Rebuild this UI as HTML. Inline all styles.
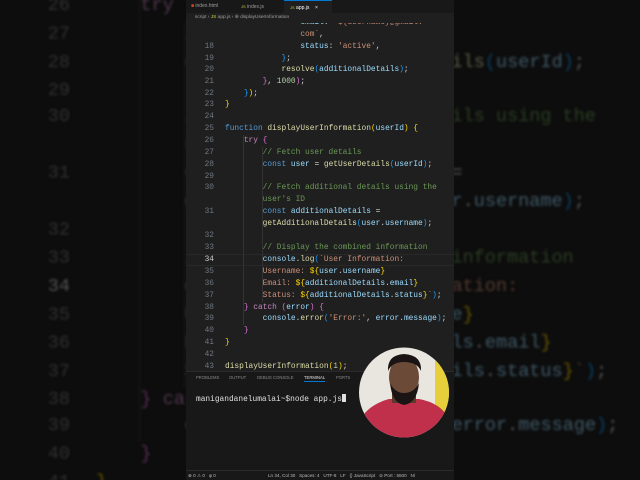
<!DOCTYPE html>
<html style="overflow:hidden;width:640px;height:480px"><head><meta charset="utf-8"><style>
*{margin:0;padding:0;box-sizing:border-box}
body{width:640px;height:480px;overflow:hidden;background:#0d0d0d;position:relative;font-family:"Liberation Mono",monospace}
.code{position:absolute;left:186px;top:0;width:268px;height:371px;font-size:7.85px;}
.code .l{position:absolute;left:0;width:268px;height:12px;line-height:12px;white-space:pre;}
.code .n{position:absolute;left:0;width:28px;text-align:right;color:#6e7681}
.code .t{position:absolute;left:39px;color:#d4d4d4}
.k{color:#569cd6}.c{color:#c586c0}.f{color:#dcdcaa}.v{color:#9cdcfe}.s{color:#ce9178}.cm{color:#6a9955}.nu{color:#b5cea8}
.y{color:#ffd700}.p{color:#da70d6}.b{color:#179fff}
#clip{position:absolute;left:0;top:0;width:640px;height:480px;overflow:hidden}
#bg{position:absolute;left:0;top:0;width:640px;height:480px;transform-origin:0 0;transform:matrix(2.36,0,0,2.36,-435,-325);filter:brightness(0.4) blur(0.6px)}
#bg .n{color:#777}
#panel{position:absolute;left:186px;top:0;width:268px;height:480px;background:#1f1f1f;overflow:hidden}
#panel .code{left:0}
.tabs{position:absolute;left:0;top:0;width:268px;height:13px;background:#181818;font-family:"Liberation Sans",sans-serif;font-size:5px;color:#9d9d9d}
.tab{position:absolute;top:0;height:13px;line-height:13px}
.crumb{position:absolute;left:0;top:13px;width:268px;height:10px;background:#1f1f1f;font-family:"Liberation Sans",sans-serif;font-size:4.8px;color:#a0a0a0;line-height:10px;padding-left:9px}
.term{position:absolute;left:0;top:371px;width:268px;height:100px;background:#181818;border-top:1px solid #2b2b2b}
.ttabs{position:absolute;top:3px;font-family:"Liberation Sans",sans-serif;font-size:4.2px;color:#8a8a8a}
.status{position:absolute;left:0;top:470px;width:268px;height:10px;background:#181818;border-top:1px solid #2b2b2b;font-family:"Liberation Sans",sans-serif;font-size:4.6px;color:#bbb;line-height:9px;white-space:nowrap}
</style></head><body>

<div id="clip"><div id="bg"><div class="code" id="c1"></div></div></div>

<div id="panel">
 <div style="position:absolute;left:0;top:254px;width:268px;height:12px;border-top:1px solid #282828;border-bottom:1px solid #282828"></div>
 <div class="code" id="c2"></div>
 <div class="tabs">
  <div class="tab" style="left:5px"><span style="color:#e44d26">■</span> index.html</div>
  <div class="tab" style="left:55px"><span style="color:#cbcb41;font-size:4px">JS</span> index.js</div>
  <div class="tab" style="left:98px;width:48px;background:#1f1f1f;color:#fff;padding-left:6px;border-top:1px solid #0078d4"><span style="color:#cbcb41;font-size:4px">JS</span> app.js &nbsp;&nbsp;&nbsp;×</div>
 </div>
 <div class="crumb">script › <span style="color:#cbcb41">JS</span> app.js › ⊛ displayUserInformation</div>
 <div class="term">
  <div class="ttabs" style="left:10px">PROBLEMS</div>
  <div class="ttabs" style="left:43px">OUTPUT</div>
  <div class="ttabs" style="left:71px">DEBUG CONSOLE</div>
  <div class="ttabs" style="left:118px;color:#e0e0e0;border-bottom:1px solid #0078d4;padding-bottom:1px">TERMINAL</div>
  <div class="ttabs" style="left:150px">PORTS</div>
  <div style="position:absolute;left:10px;top:22px;font-size:7.85px;color:#e0e0e0;white-space:pre">manigandanelumalai~$node app.js<span style="display:inline-block;width:4px;height:8px;background:#e0e0e0;vertical-align:-1px"></span></div>
 </div>
 <div class="status">
  <span style="position:absolute;left:2px">⊗ 0 ⚠ 0 &nbsp;&nbsp;ψ 0</span>
  <span style="position:absolute;left:82px">Ln 34, Col 30 &nbsp;&nbsp;Spaces: 4 &nbsp;&nbsp;UTF-8 &nbsp;&nbsp;LF &nbsp;&nbsp;{} JavaScript &nbsp;&nbsp;⊘ Port : 5500 &nbsp;&nbsp;Nl</span>
 </div>
 <svg style="position:absolute;left:173px;top:347px" width="90" height="91" viewBox="0 0 90 91">
  <defs><clipPath id="cc"><circle cx="45" cy="45.5" r="45"/></clipPath></defs>
  <g clip-path="url(#cc)">
   <rect width="90" height="91" fill="#e9e6df"/>
   <rect x="76" y="0" width="14" height="91" fill="#e6cf3a"/>
   <path d="M0 75 Q8 58 30 52 L60 52 Q82 56 90 72 L90 91 L0 91Z" fill="#c0304a"/>
   <rect x="33" y="38" width="24" height="18" fill="#5a3b2c"/>
   <ellipse cx="45" cy="30" rx="15" ry="20" fill="#6b4a38"/>
   <path d="M29 24 Q28 8 45 7 Q63 8 62 24 Q58 15 45 15 Q33 15 29 24Z" fill="#1a1414"/>
   <path d="M31 36 Q33 56 45 58 Q58 56 60 36 Q55 46 45 46 Q36 46 31 36Z" fill="#1a1414"/>
  </g>
 </svg>
</div>

<script>
var L=[
[23,"","                <span class='v'>email</span>: <span class='s'>`${username}@gmail.</span>"],
[35,"","                <span class='s'>com`</span>,"],
[47,"18","                <span class='v'>status</span>: <span class='s'>'active'</span>,"],
[59,"19","            <span class='b'>}</span>;"],
[70,"20","            <span class='f'>resolve</span><span class='b'>(</span><span class='v'>additionalDetails</span><span class='b'>)</span>;"],
[82,"21","        <span class='p'>}</span>, <span class='nu'>1000</span><span class='p'>)</span>;"],
[94,"22","    <span class='b'>}</span><span class='y'>)</span>;"],
[105,"23","<span class='y'>}</span>"],
[117,"24",""],
[129,"25","<span class='k'>function</span> <span class='f'>displayUserInformation</span><span class='y'>(</span><span class='v'>userId</span><span class='y'>)</span> <span class='y'>{</span>"],
[141,"26","    <span class='c'>try</span> <span class='p'>{</span>"],
[153,"27","        <span class='cm'>// Fetch user details</span>"],
[165,"28","        <span class='k'>const</span> <span class='v'>user</span> = <span class='f'>getUserDetails</span><span class='b'>(</span><span class='v'>userId</span><span class='b'>)</span>;"],
[177,"29",""],
[188,"30","        <span class='cm'>// Fetch additional details using the</span>"],
[200,"","        <span class='cm'>user's ID</span>"],
[212,"31","        <span class='k'>const</span> <span class='v'>additionalDetails</span> ="],
[224,"","        <span class='f'>getAdditionalDetails</span><span class='b'>(</span><span class='v'>user</span>.<span class='v'>username</span><span class='b'>)</span>;"],
[236,"32",""],
[248,"33","        <span class='cm'>// Display the combined information</span>"],
[260,"34","        <span class='v'>console</span>.<span class='f'>log</span><span class='b'>(</span><span class='s'>`User Information:</span>"],
[272,"35","        <span class='s'>Username: </span><span class='y'>${</span><span class='v'>user</span>.<span class='v'>username</span><span class='y'>}</span>"],
[284,"36","        <span class='s'>Email: </span><span class='y'>${</span><span class='v'>additionalDetails</span>.<span class='v'>email</span><span class='y'>}</span>"],
[296,"37","        <span class='s'>Status: </span><span class='y'>${</span><span class='v'>additionalDetails</span>.<span class='v'>status</span><span class='y'>}</span><span class='s'>`</span><span class='b'>)</span>;"],
[308,"38","    <span class='p'>}</span> <span class='c'>catch</span> <span class='p'>(</span><span class='v'>error</span><span class='p'>)</span> <span class='p'>{</span>"],
[319,"39","        <span class='v'>console</span>.<span class='f'>error</span><span class='b'>(</span><span class='s'>'Error:'</span>, <span class='v'>error</span>.<span class='v'>message</span><span class='b'>)</span>;"],
[331,"40","    <span class='p'>}</span>"],
[343,"41","<span class='y'>}</span>"],
[355,"42",""],
[367,"43","<span class='f'>displayUserInformation</span><span class='y'>(</span><span class='nu'>1</span><span class='y'>)</span>;"]
];
var h="";
L.forEach(function(a){h+="<div class='l' style='top:"+(a[0]-6)+"px'><span class='n'"+(a[1]=="34"?" style='color:#ccc'":"")+">"+a[1]+"</span><span class='t'>"+a[2]+"</span></div>";});
h+="<div style='position:absolute;left:57px;top:135px;width:1px;height:190px;background:#333'></div><div style='position:absolute;left:76px;top:147px;width:1px;height:155px;background:#333'></div>";
document.getElementById("c1").innerHTML=h;
document.getElementById("c2").innerHTML=h;
</script>
</body></html>
